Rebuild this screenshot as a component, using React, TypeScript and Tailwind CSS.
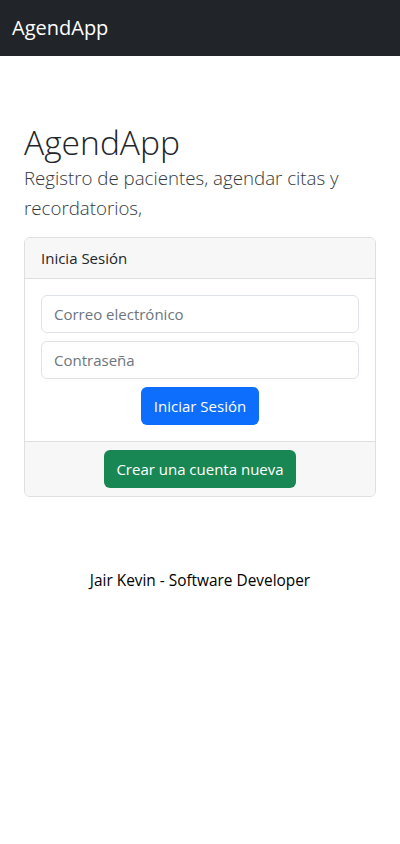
import { useState } from 'react';

export default function App() {
  const [email, setEmail] = useState('');
  const [password, setPassword] = useState('');

  return (
    <div className="min-h-[844px] bg-white font-['Open_Sans',sans-serif] text-[#212529]">
      {/* Navbar */}
      <nav className="flex h-14 items-center bg-[#212529] px-3">
        <span className="text-[20px] leading-[30px] text-white">AgendApp</span>
      </nav>

      <main className="px-6 pt-[66px]">
        <h1 className="text-[33.6px] font-light leading-[41px]">AgendApp</h1>
        <p className="text-[18.7px] font-light leading-[30px] text-[#33383d]">
          Registro de pacientes, agendar citas y recordatorios,
        </p>

        {/* Login card */}
        <div className="mt-[14px] overflow-hidden rounded-md border border-[#dfdfdf]">
          <div className="border-b border-[#dfdfdf] bg-[#f7f7f7] px-4 py-2 text-[15px] leading-6">
            Inicia Sesión
          </div>
          <div className="flex flex-col gap-2 p-4">
            <input
              type="email"
              value={email}
              onChange={(e) => setEmail(e.target.value)}
              placeholder="Correo electrónico"
              className="h-[38px] w-full rounded-md border border-[#dee2e6] px-3 text-[15px] outline-none placeholder:text-[#6c757d]"
            />
            <input
              type="password"
              value={password}
              onChange={(e) => setPassword(e.target.value)}
              placeholder="Contraseña"
              className="h-[38px] w-full rounded-md border border-[#dee2e6] px-3 text-[15px] outline-none placeholder:text-[#6c757d]"
            />
            <button className="mx-auto h-[38px] w-[118px] rounded-md bg-[#0d6efd] text-[15px] text-white">
              Iniciar Sesión
            </button>
          </div>
          <div className="flex justify-center border-t border-[#dfdfdf] bg-[#f7f7f7] px-4 py-2">
            <button className="h-[38px] w-[192px] rounded-md bg-[#198754] text-[15px] text-white">
              Crear una cuenta nueva
            </button>
          </div>
        </div>
      </main>

      <footer className="mt-[72px] text-center text-[15.4px] leading-6 text-black">
        Jair Kevin - Software Developer
      </footer>
    </div>
  );
}
